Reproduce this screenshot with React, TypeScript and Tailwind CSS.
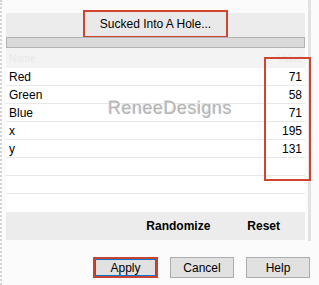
import React from 'react';

const rows: { label: string; value: string }[] = [
  { label: 'Red', value: '71' },
  { label: 'Green', value: '58' },
  { label: 'Blue', value: '71' },
  { label: 'x', value: '195' },
  { label: 'y', value: '131' },
  { label: '', value: '' },
  { label: '', value: '' },
  { label: '', value: '' },
];

const DialogButton: React.FC<{ label: string; focused?: boolean }> = ({ label, focused }) =>
  focused ? (
    <div className="w-[65px] h-[21px] border-2 border-[#c9432f]">
      <div className="w-full h-full border border-[#0078d7] bg-[#e1e1e1] flex items-center justify-center text-[12px] text-black">
        {label}
      </div>
    </div>
  ) : (
    <div className="w-[64px] h-[21px] border border-[#adadad] bg-[#e1e1e1] flex items-center justify-center text-[12px] text-black">
      {label}
    </div>
  );

export default function App() {
  return (
    <div
      className="relative w-[319px] h-[285px] overflow-hidden bg-[#fbfbfb] border-l-2 border-dotted border-[#d4d4d4]"
      style={{ fontFamily: '"Liberation Sans", Arial, sans-serif' }}
    >
      <div className="ml-[4px] w-[305px] h-[241px] pt-[13px] border-r-[3px] border-[#e2e2e2]">
        {/* top panel */}
        <div className="w-[299px] bg-[#ececec] flex flex-col items-center">
          <div className="-mt-[3px] w-[145px] h-[28px] border-2 border-[#d0452f] bg-[#e9e9e9] flex items-center justify-center text-[12px] text-black">
            Sucked Into A Hole...
          </div>
          <div className="-mt-[1px] w-full h-[11px] border border-[#b3b3b3] bg-[#dadada]" />
        </div>

        {/* header strip */}
        <div className="w-[299px] h-[20px] bg-[#f3f3f3] flex items-center justify-between px-[3px] text-[10px] text-[#e8e8e8]">
          <span>Name</span>
          <span>Value</span>
        </div>

        {/* property rows */}
        <div className="relative w-[299px] bg-white">
          {rows.map((r, i) => (
            <div
              key={i}
              className={
                'h-[18px] flex items-center justify-between pl-[3px] pr-[3px] text-[12px] text-black ' +
                (i < rows.length - 1 ? 'border-b border-[#e8e8e8]' : '')
              }
            >
              <span>{r.label}</span>
              <span>{r.value}</span>
            </div>
          ))}
          <div className="absolute left-[102px] top-[27px] text-[18px] tracking-[0.5px] text-[#b4b4b4] [text-shadow:1px_1px_0_#ffffff,-1px_-1px_0_#e0e0e0]">
            ReneeDesigns
          </div>
        </div>

        {/* bottom strip */}
        <div className="w-[299px] h-[28px] bg-[#ececec] flex items-center justify-end pr-[25px] gap-[37px] text-[12px] font-bold text-black">
          <span>Randomize</span>
          <span>Reset</span>
        </div>
      </div>

      {/* dialog buttons */}
      <div className="mt-[16px] flex justify-end gap-[12px] pr-[9px]">
        <DialogButton label="Apply" focused />
        <DialogButton label="Cancel" />
        <DialogButton label="Help" />
      </div>

      {/* highlight annotation */}
      <div className="absolute left-[262px] top-[57px] w-[47px] h-[124px] border-2 border-[#d0452f]" />
    </div>
  );
}
